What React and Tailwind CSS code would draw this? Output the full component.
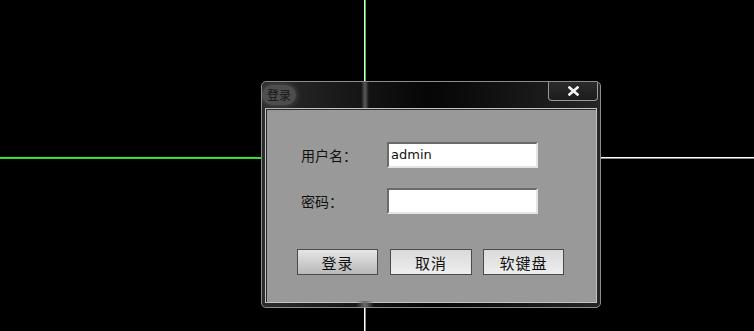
export default function App() {
    return (
        <div className="relative w-[754px] h-[331px] bg-black overflow-hidden" style={{ fontFamily: '"Noto Sans CJK SC", "Liberation Sans", sans-serif' }}>
            {/* crosshair lines behind the dialog */}
            <div className="absolute left-[364px] top-0 w-px h-[81px] bg-white" />
            <div className="absolute left-[365px] top-0 w-px h-[81px] bg-[#22d022]" />
            <div className="absolute left-[364px] top-[308px] w-px h-[23px] bg-white" />
            <div className="absolute left-[365px] top-[308px] w-px h-[23px] bg-[#8a8a8a]" />
            <div className="absolute left-0 top-[157px] w-[261px] h-px bg-[#19ff19]" />
            <div className="absolute left-0 top-[158px] w-[261px] h-px bg-[#3fcf3f]" />
            <div className="absolute left-[601px] top-[157px] w-[153px] h-px bg-white" />
            <div className="absolute left-[601px] top-[158px] w-[153px] h-px bg-[#8a8a8a]" />

            <div className="pl-[261px] pt-[81px]">
                <div className="relative w-[340px] h-[227px] rounded-[5px] border border-[#8c8c8c] bg-gradient-to-r from-[#2c2c2c] via-[#060606] to-[#262626] flex flex-col overflow-hidden">
                    {/* light streak from the line behind */}
                    <div className="absolute left-[99px] top-0 w-[8px] h-[26px] bg-gradient-to-r from-transparent via-[#8a8a8a] to-transparent opacity-60" />
                    <div className="absolute left-[94px] bottom-0 w-[18px] h-[6px] bg-gradient-to-r from-transparent via-[#6a6a6a] to-transparent" />

                    <div className="relative h-[26px] flex items-start justify-between">
                        <div className="mt-[3px] px-[5px] h-[20px] rounded-full bg-[#5e5e5e]/70 shadow-[0_0_6px_#555] flex items-center text-[12px] leading-none text-[#151515]">
                            登录
                        </div>
                        <button className="mr-[2px] -mt-px w-[50px] h-[20px] rounded-b-[4px] border border-t-0 border-[#9a9a9a] bg-gradient-to-b from-[#2c2c2c] to-[#1c1c1c] flex items-center justify-center">
                            <svg width="11" height="10" viewBox="0 0 11 10">
                                <path d="M1.5 1.5 L9.5 8.5 M9.5 1.5 L1.5 8.5" stroke="#f2f2f2" strokeWidth="2.6" strokeLinecap="square" />
                            </svg>
                        </button>
                    </div>

                    <div className="mx-[3px] mb-[4px] flex-1 border border-[#c4c4c4] shadow-[inset_1px_1px_0_#2a2a2a] bg-[#999999] pl-[31px] pt-[33px]">
                        <div className="flex items-center h-[26px]">
                            <span className="ml-[4px] w-[86px] text-[14px] text-[#111]">用户名：</span>
                            <div className="w-[151px] h-[26px] bg-white border-2 border-t-[#6a6a6a] border-l-[#6a6a6a] border-b-[#e4e4e4] border-r-[#e4e4e4] flex items-center pl-[2px] text-[13px] text-[#111]" style={{ fontFamily: '"DejaVu Sans", sans-serif' }}>
                                admin
                            </div>
                        </div>
                        <div className="flex items-center h-[26px] mt-[20px]">
                            <span className="ml-[4px] w-[86px] text-[14px] text-[#111]">密码：</span>
                            <div className="w-[151px] h-[26px] bg-white border-2 border-t-[#6a6a6a] border-l-[#6a6a6a] border-b-[#e4e4e4] border-r-[#e4e4e4]" />
                        </div>
                        <div className="flex mt-[35px] gap-[12px]">
                            <button className="w-[81px] h-[26px] border border-[#4a4a4a] bg-gradient-to-b from-[#e6e6e6] via-[#cfcfcf] to-[#b8b8b8] text-[15px] leading-none tracking-[1px] text-[#111] flex items-center justify-center">
                                登录
                            </button>
                            <button className="w-[82px] h-[26px] border border-[#4a4a4a] bg-gradient-to-b from-[#dadada] to-[#eeeeee] text-[15px] leading-none tracking-[1px] text-[#111] flex items-center justify-center">
                                取消
                            </button>
                            <button className="-ml-px w-[81px] h-[26px] border border-[#4a4a4a] bg-gradient-to-b from-[#dadada] to-[#eeeeee] text-[15px] leading-none tracking-[1px] text-[#111] flex items-center justify-center">
                                软键盘
                            </button>
                        </div>
                    </div>
                </div>
            </div>
        </div>
    );
}
